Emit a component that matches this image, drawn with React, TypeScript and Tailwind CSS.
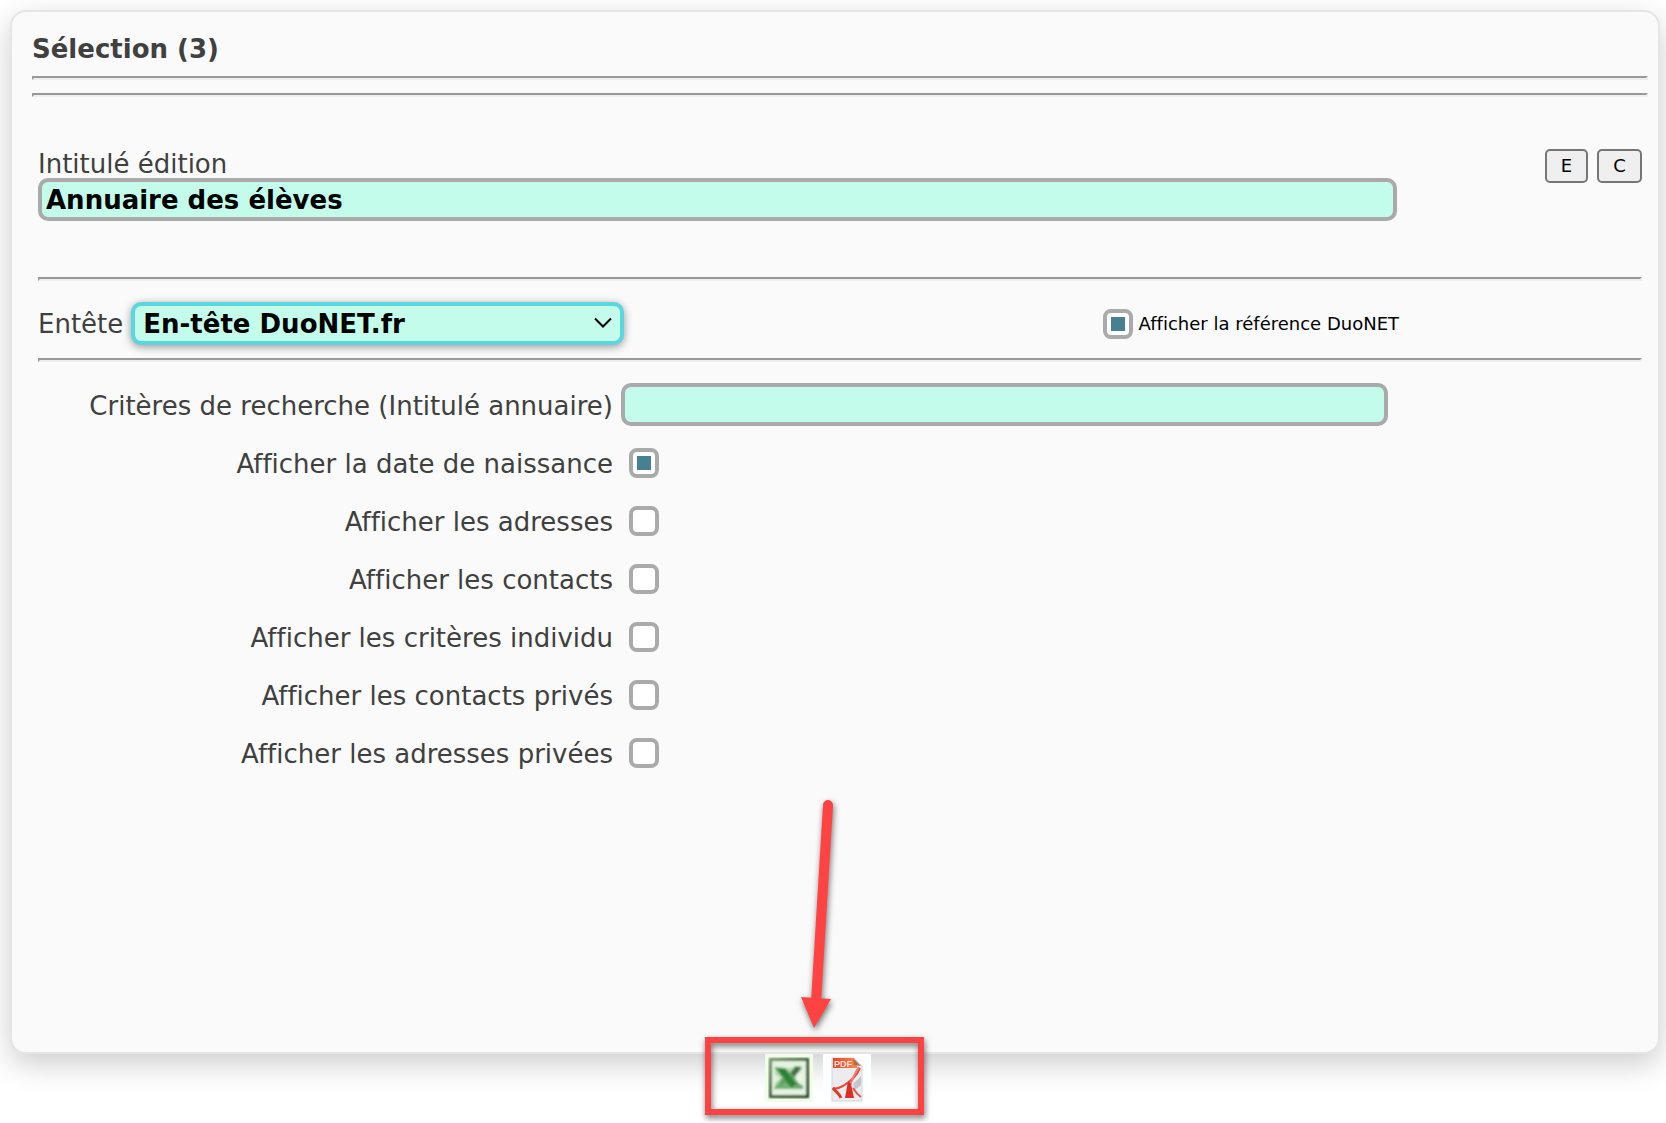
import React, { useState } from 'react';

interface DisplayOption {
  id: string;
  label: string;
  checked: boolean;
}

const displayOptions: DisplayOption[] = [
  { id: 'naissance', label: 'Afficher la date de naissance', checked: true },
  { id: 'adresses', label: 'Afficher les adresses', checked: false },
  { id: 'contacts', label: 'Afficher les contacts', checked: false },
  { id: 'criteres', label: 'Afficher les critères individu', checked: false },
  { id: 'contacts-prives', label: 'Afficher les contacts privés', checked: false },
  { id: 'adresses-privees', label: 'Afficher les adresses privées', checked: false },
];

const Divider = ({ className = '' }: { className?: string }) => (
  <hr className={`border-2 border-t-[#999] border-l-[#999] border-r-[#eee] border-b-[#eee] ${className}`} />
);

const Checkbox = ({ id, defaultChecked }: { id: string; defaultChecked?: boolean }) => (
  <span className="grid size-[30px] shrink-0 place-items-center">
    <input
      id={id}
      type="checkbox"
      defaultChecked={defaultChecked}
      className="peer col-start-1 row-start-1 size-[30px] appearance-none rounded-lg border-4 border-[#aaa] bg-white"
    />
    <span className="pointer-events-none col-start-1 row-start-1 hidden size-[14px] bg-[#478090] peer-checked:block" />
  </span>
);

const ExcelIcon = () => (
  <svg viewBox="0 0 48 48" className="size-12" aria-hidden="true">
    <defs>
      <filter id="soft-xls" x="-5%" y="-5%" width="110%" height="110%">
        <feGaussianBlur stdDeviation="1" />
      </filter>
      <linearGradient id="xls-frame" x1="0" y1="0" x2="1" y2="1">
        <stop offset="0" stopColor="#6f8f68" />
        <stop offset="0.5" stopColor="#35552f" />
        <stop offset="1" stopColor="#1d3a1a" />
      </linearGradient>
    </defs>
    <rect width="48" height="48" fill="#f0fde8" />
    <g filter="url(#soft-xls)">
      <rect x="5.5" y="5.5" width="37" height="37" fill="#e4f3e0" stroke="url(#xls-frame)" strokeWidth="3" />
      <path d="M10 14H36V34H10Z" fill="#b5d8b1" />
      <path d="M31 20L37 17V31L31 27Z" fill="#e9f5e6" />
      <path d="M9 20L16 24L9 30Z" fill="#e2f2de" />
      <path d="M9 34L17 24L27 33V35H9Z" fill="#74b073" />
      <path d="M9 13L20 14L25 19L30 12L37 13L29 24L38 34H27L20 28L14 34L18 24Z" fill="#56a05a" />
      <path d="M12 15L20 15L33 33H26Z" fill="#2f8038" />
      <path d="M31 13H37L30 22L26 19Z" fill="#4a6b4e" />
      <path d="M29 31H38V35H27Z" fill="#6fa872" />
    </g>
  </svg>
);

const PdfIcon = () => (
  <svg viewBox="0 0 48 48" className="size-12" aria-hidden="true">
    <defs>
      <filter id="soft-pdf" x="-5%" y="-5%" width="110%" height="110%">
        <feGaussianBlur stdDeviation="0.7" />
      </filter>
      <linearGradient id="pdf-band" x1="0" y1="0" x2="1" y2="0">
        <stop offset="0" stopColor="#e8452c" />
        <stop offset="1" stopColor="#f58a55" />
      </linearGradient>
    </defs>
    <rect width="48" height="48" fill="#fdfeff" />
    <g filter="url(#soft-pdf)">
      <path d="M9 4H31L39 12V47H9Z" fill="#ececee" stroke="#d3d5d8" strokeWidth="1" />
      <path d="M30 30L38 22V31L32 36Z" fill="#c3c7cd" />
      <path d="M10 4H30L34 9V14H10Z" fill="url(#pdf-band)" />
      <path d="M30 4L38 12L31 11Z" fill="#b9694f" />
      <text x="11" y="13" fontSize="9" fontWeight="bold" fill="#ffe6dc" fontFamily="Liberation Sans, sans-serif">PDF</text>
      <path d="M37 14C34 21 27 28 20 32C16 34 12 35 10 34" fill="none" stroke="#e8483c" strokeWidth="2" />
      <path d="M36 13C30 21 28 28 26 36" fill="none" stroke="#ef8077" strokeWidth="2" />
      <path d="M25 27L28 30L31 44H22Z" fill="#dd2d22" />
      <path d="M10 34C13 38 16 39 18 44" fill="none" stroke="#dd3a30" strokeWidth="3" />
      <path d="M30 34C33 39 35 41 38 43" fill="none" stroke="#e4564c" strokeWidth="2" />
    </g>
  </svg>
);

// Red frame and arrow drawn over the export buttons
const ExportCallout = () => (
  <svg
    viewBox="0 0 240 330"
    className="pointer-events-none absolute -top-[264px] left-1/2 h-[330px] w-[240px] -translate-x-1/2 drop-shadow-[1px_3px_3px_rgba(0,0,0,0.55)]"
    aria-hidden="true"
  >
    <rect x="10" y="250" width="213" height="72" fill="none" stroke="#ff4242" strokeWidth="6" />
    <path d="M130 15L118 212" stroke="#ff4242" strokeWidth="10" strokeLinecap="round" />
    <path d="M103 207L133 209L116 238Z" fill="#ff4242" />
  </svg>
);

const App: React.FC = () => {
  const [title, setTitle] = useState('Annuaire des élèves');
  const [criteria, setCriteria] = useState('');

  return (
    <main className="overflow-hidden bg-white pt-[10px] pr-[6px] pb-5 pl-[10px] font-['DejaVu_Sans',sans-serif] text-[26px] leading-7 text-[#404040] [font-variant-ligatures:none]">
      <form onSubmit={(e) => e.preventDefault()}>
        <section className="rounded-2xl border-2 border-[#e5e5e5] bg-[#fafafa] pt-5 pr-[10px] pb-[270px] pl-5 shadow-[0_10px_30px_rgba(0,0,0,0.2)]">
          <h1 className="mb-[10px] leading-[34px] font-bold">Sélection (3)</h1>
          <Divider />
          <Divider className="mt-[13px]" />

          <div className="px-[6px]">
            {/* Title of the printed document */}
            <div className="mt-[52px] flex items-start">
              <div className="flex flex-1 flex-col">
                <label htmlFor="intitule" className="pt-px">
                  Intitulé édition
                </label>
                <input
                  id="intitule"
                  type="text"
                  value={title}
                  onChange={(e) => setTitle(e.target.value)}
                  className="h-[43px] w-full rounded-[10px] border-4 border-[#aaa] bg-[#c3fcea] px-1 pt-px font-bold text-black"
                />
              </div>
              <div className="flex w-[245px] justify-end gap-[9px]">
                <button type="button" className="h-[34px] w-[43px] rounded-[5px] border-2 border-[#767676] bg-[#efefef] text-lg text-black">
                  E
                </button>
                <button type="button" className="h-[34px] w-[45px] rounded-[5px] border-2 border-[#767676] bg-[#efefef] text-lg text-black">
                  C
                </button>
              </div>
            </div>

            <Divider className="mt-14" />

            {/* Header template */}
            <div className="mt-[21px] mb-[13px] flex items-center justify-between pr-[243px]">
              <div className="flex items-center gap-2">
                <label htmlFor="entete" className="pt-px">
                  Entête
                </label>
                <div className="relative">
                  <select
                    id="entete"
                    className="h-[43px] w-[493px] appearance-none rounded-[10px] border-4 border-[#5cd6de] bg-[#c3fcea] px-2 pt-px font-bold text-black shadow-[0_2px_8px_rgba(0,0,0,0.4)]"
                  >
                    <option>En-tête DuoNET.fr</option>
                  </select>
                  <svg viewBox="0 0 18 12" className="pointer-events-none absolute top-[15px] right-3 h-3 w-[18px]" aria-hidden="true">
                    <path d="M1 1.5L9 9.5L17 1.5" fill="none" stroke="#000" strokeWidth="2" />
                  </svg>
                </div>
              </div>
              <div className="flex items-center gap-[6px]">
                <Checkbox id="reference" defaultChecked />
                <label htmlFor="reference" className="pt-px text-lg text-black">
                  Afficher la référence DuoNET
                </label>
              </div>
            </div>

            <Divider />

            {/* Search criteria */}
            <div className="mt-[21px] mb-2 grid grid-cols-[575px_1fr] items-center gap-2 pr-[254px]">
              <label htmlFor="recherche" className="pt-[2px] text-right whitespace-nowrap">
                Critères de recherche (Intitulé annuaire)
              </label>
              <input
                id="recherche"
                type="text"
                value={criteria}
                onChange={(e) => setCriteria(e.target.value)}
                className="h-[43px] w-full rounded-[10px] border-4 border-[#aaa] bg-[#c3fcea] px-1 font-bold text-black"
              />
            </div>

            {displayOptions.map((option) => (
              <div key={option.id} className="grid h-[58px] grid-cols-[575px_1fr] items-center gap-4">
                <label htmlFor={option.id} className="pt-[2px] text-right">
                  {option.label}
                </label>
                <Checkbox id={option.id} defaultChecked={option.checked} />
              </div>
            ))}
          </div>
        </section>

        {/* Export buttons */}
        <div className="flex justify-center pr-[34px]">
          <div className="relative flex gap-[10px]">
            <button type="button" aria-label="Exporter vers Excel">
              <ExcelIcon />
            </button>
            <button type="button" aria-label="Exporter en PDF">
              <PdfIcon />
            </button>
            <ExportCallout />
          </div>
        </div>
      </form>
    </main>
  );
};

export default App;
